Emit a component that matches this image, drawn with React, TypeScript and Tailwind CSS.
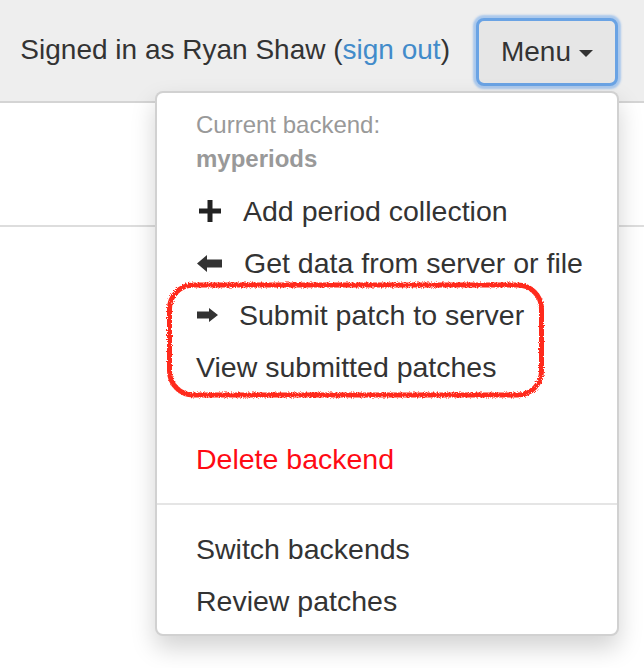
import React from "react";

const Plus = () => (
  <svg width="22" height="22" viewBox="0 0 22 22" className="block">
    <path d="M8.5 0h5v8.5H22v5h-8.5V22h-5v-8.5H0v-5h8.5z" fill="#222" />
  </svg>
);

const ArrowLeft = () => (
  <svg width="25" height="17" viewBox="0 0 25 17" className="block">
    <path d="M0 8.5L10 0v4.5h15v8H10V17z" fill="#333" />
  </svg>
);

const ArrowRight = () => (
  <svg width="21" height="14" viewBox="0 0 21 14" className="block">
    <path d="M0 3.5h12V0l9 7-9 7v-3.5H0z" fill="#333" />
  </svg>
);

export default function App() {
  return (
    <div className="relative w-[644px] h-[668px] overflow-hidden bg-white font-['Liberation_Sans',Helvetica,Arial,sans-serif] text-[#333]">
      <header className="h-[103px] bg-[#eeeeee] border-b-2 border-[#d4d4d4] flex items-start justify-end pr-[26px]">
        <p className="mt-[30px] text-[28px] leading-[40px] text-[#333] whitespace-nowrap">
          Signed in as Ryan Shaw (<span className="text-[#428bca]">sign out</span>)
        </p>
        <button className="ml-[26px] mt-[18px] h-[68px] px-[22px] rounded-[8px] border-[3px] border-[#6aa3e4] bg-[#e6e6e6] shadow-[0_0_2px_3px_rgba(125,175,235,0.6)] flex items-center gap-[8px] text-[28px] leading-[40px] text-[#333]">
          <span>Menu</span>
          <span className="block w-0 h-0 border-t-[7px] border-t-[#333] border-x-[7px] border-x-transparent mt-[2px]" />
        </button>
      </header>
      <div className="h-[124px] border-b-2 border-[#dddddd]" />

      <div className="absolute left-[155px] top-[91px] w-[464px] rounded-[8px] border-2 border-[rgba(0,0,0,0.18)] bg-white shadow-[0_12px_24px_rgba(0,0,0,0.175)] pt-[9px] pb-[7px]">
        <div className="px-[39px] pt-[6px] pb-[9px] text-[24px] leading-[34px] text-[#999]">
          Current backend:
          <br />
          <strong className="font-bold">myperiods</strong>
        </div>
        <div className="flex items-center h-[52px] pl-[40px] pr-[20px] text-[28.5px] leading-[40px] whitespace-nowrap">
          <span className="w-[46px] shrink-0 flex pl-[2px]"><Plus /></span>
          <span>Add period collection</span>
        </div>
        <div className="flex items-center h-[52px] pl-[40px] pr-[20px] text-[28.5px] leading-[40px] whitespace-nowrap">
          <span className="w-[47px] shrink-0 flex"><ArrowLeft /></span>
          <span>Get data from server or file</span>
        </div>
        <div className="flex items-center h-[52px] pl-[40px] pr-[20px] text-[28.5px] leading-[40px] whitespace-nowrap">
          <span className="w-[42px] shrink-0 flex"><ArrowRight /></span>
          <span>Submit patch to server</span>
        </div>
        <div className="flex items-center h-[52px] px-[39px] text-[28.5px] leading-[40px] whitespace-nowrap">
          View submitted patches
        </div>
        <div className="h-[40px]" />
        <div className="flex items-center h-[52px] px-[39px] text-[28.5px] leading-[40px] text-[#ff0a14] whitespace-nowrap">
          Delete backend
        </div>
        <div className="my-[18px] h-[2px] bg-[#e5e5e5]" />
        <div className="flex items-center h-[52px] px-[39px] text-[28.5px] leading-[40px] whitespace-nowrap">
          Switch backends
        </div>
        <div className="flex items-center h-[52px] px-[39px] text-[28.5px] leading-[40px] whitespace-nowrap">
          Review patches
        </div>
      </div>

      <svg className="absolute left-[160px] top-[275px]" width="392" height="132" viewBox="0 0 392 132">
        <defs>
          <filter id="rough" x="-5%" y="-10%" width="110%" height="120%">
            <feTurbulence type="fractalNoise" baseFrequency="0.8" numOctaves="2" result="n" />
            <feDisplacementMap in="SourceGraphic" in2="n" scale="4" />
          </filter>
        </defs>
        <rect x="9.5" y="10" width="372" height="110" rx="24" fill="none" stroke="#ff2a1c" strokeWidth="5" filter="url(#rough)" />
      </svg>
    </div>
  );
}
